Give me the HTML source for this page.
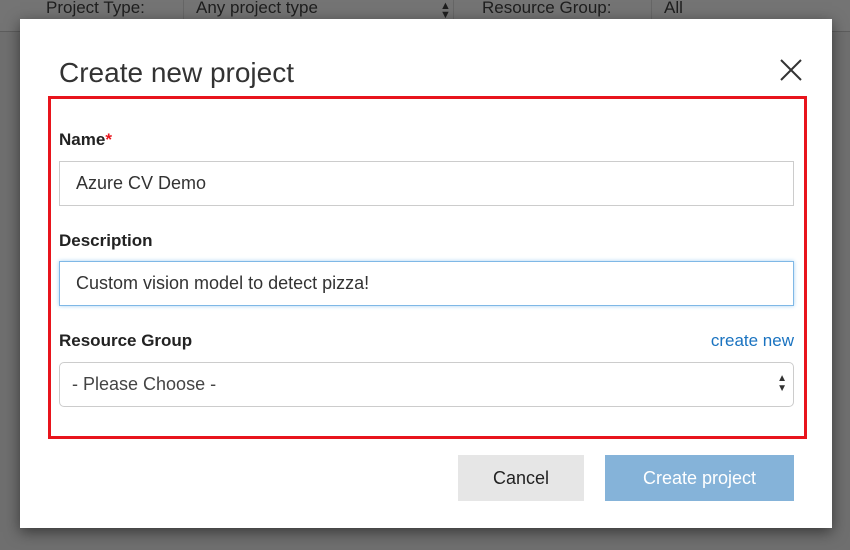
<!DOCTYPE html>
<html><head><style>
body{margin:0;width:850px;height:550px;background:#6f6f6f;position:relative;overflow:hidden;font-family:"Liberation Sans",sans-serif;}
.top{position:absolute;left:0;top:0;width:850px;height:31px;background:#747474;border-bottom:1px solid #5d5d5d;color:#1e1e1e;font-size:17px;}
.top span{position:absolute;top:-2px;}
.dlg{position:absolute;left:20px;top:19px;width:812px;height:509px;background:#fff;box-shadow:0 4px 14px rgba(0,0,0,.5);}
.a{position:absolute;}
.lbl{font-size:17px;font-weight:bold;color:#222;}
.inp{position:absolute;left:39px;height:43px;border:1px solid #ccc;font-size:18px;color:#333;line-height:43px;padding-left:16px;box-sizing:content-box;width:717px;}
</style></head><body>
<div class="top"><span style="left:46px">Project Type:</span><span style="left:196px">Any project type</span><span style="left:440px;font-size:11px;top:2px;line-height:9px">▲<br>▼</span><span style="left:482px">Resource Group:</span><span style="left:664px">All</span>
<div class="a" style="left:183px;top:0;width:1px;height:31px;background:#666"></div><div class="a" style="left:453px;top:0;width:1px;height:31px;background:#666"></div><div class="a" style="left:651px;top:0;width:1px;height:31px;background:#666"></div></div>
<div class="dlg">
<div class="a" style="left:39px;top:38px;font-size:28px;color:#333">Create new project</div>
<svg class="a" style="left:759px;top:39px" width="24" height="24"><path d="M2 2L22 22M22 2L2 22" stroke="#333" stroke-width="2"/></svg>
<div class="a" style="left:28px;top:77px;width:753px;height:337px;border:3px solid #e8141c"></div>
<div class="a lbl" style="left:39px;top:111px">Name<span style="color:#e8141c">*</span></div>
<div class="inp" style="top:142px">Azure CV Demo</div>
<div class="a lbl" style="left:39px;top:212px">Description</div>
<div class="inp" style="top:242px;border-color:#7fb8e6;box-shadow:0 0 4px #a8d2f2">Custom vision model to detect pizza!</div>
<div class="a lbl" style="left:39px;top:312px">Resource Group</div>
<div class="a" style="right:38px;top:312px;font-size:17px;color:#1a73c0">create new</div>
<div class="inp" style="top:343px;border-radius:5px;padding-left:12px;width:721px;color:#444">- Please Choose -<span class="a" style="right:6px;top:11px;font-size:10px;line-height:10px;color:#333">▲<br>▼</span></div>
<div class="a" style="left:438px;top:436px;width:126px;height:46px;background:#e6e6e6;font-size:18px;color:#222;text-align:center;line-height:46px">Cancel</div>
<div class="a" style="left:585px;top:436px;width:189px;height:46px;background:#85b3d9;font-size:18px;color:#fff;text-align:center;line-height:46px">Create project</div>
</div>
</body></html>
